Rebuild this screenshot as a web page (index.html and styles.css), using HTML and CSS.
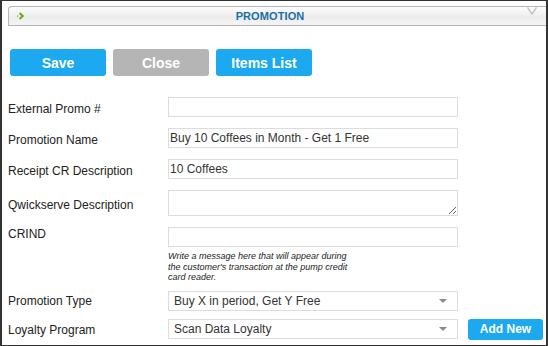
FILE: index.html
```html
<!doctype html>
<html>
<head>
<meta charset="utf-8">
<title>Promotion</title>
<link rel="stylesheet" href="styles.css">
</head>
<body>
<div class="frame">
	<div class="panel-head">
		<svg class="head-arrow" width="8" height="8" viewBox="0 0 8 8"><rect x="0" y="3.5" width="1.2" height="1.2" fill="#6ea61e"/><path d="M2.6 1 L5.8 4 L2.6 7" fill="none" stroke="#6ea61e" stroke-width="2"/></svg>
		<span class="head-title">PROMOTION</span>
		<svg class="head-notch" width="10" height="8" viewBox="0 0 10 8"><path d="M0.5 0.5 L5 7 L9.5 0.5" fill="none" stroke="#c4c4c4" stroke-width="1.4"/></svg>
	</div>
	<div class="toolbar">
		<button class="btn">Save</button>
		<button class="btn btn-grey">Close</button>
		<button class="btn">Items List</button>
	</div>
	<div class="form">
		<div class="row">
			<label>External Promo #</label>
			<input class="field" type="text" value="">
		</div>
		<div class="row">
			<label>Promotion Name</label>
			<input class="field" type="text" value="Buy 10 Coffees in Month - Get 1 Free">
		</div>
		<div class="row">
			<label>Receipt CR Description</label>
			<input class="field" type="text" value="10 Coffees">
		</div>
		<div class="row">
			<label>Qwickserve Description</label>
			<textarea class="field field-area"></textarea>
		</div>
		<div class="row row-top">
			<label>CRIND</label>
			<div>
				<input class="field" type="text" value="">
				<p class="hint">Write a message here that will appear during the customer's transaction at the pump credit card reader.</p>
			</div>
		</div>
		<div class="row row-select">
			<label>Promotion Type</label>
			<div class="field select"><span>Buy X in period, Get Y Free</span><i class="caret"></i></div>
		</div>
		<div class="row row-select">
			<label>Loyalty Program</label>
			<div class="field select"><span>Scan Data Loyalty</span><i class="caret"></i></div>
			<button class="btn btn-small">Add New</button>
		</div>
	</div>
</div>
</body>
</html>
```

FILE: styles.css
```css
*{margin:0; padding:0; box-sizing:border-box;}
body{font-family:"Liberation Sans", Arial, sans-serif; font-size:12px; color:#222; background:#fff; overflow:hidden;}
.frame{width:548px; height:346px; border:1px solid #333; border-left-width:2px; border-right-width:2px; overflow:hidden;}

/* panel header */
.panel-head{display:flex; align-items:center; height:20px; margin:5px 0 0 6px; padding:0 0 0 8px; border:1px solid #b6b6b6; border-right:none; border-radius:4px 0 0 0; background:linear-gradient(#fdfdfd, #ececec 55%, #f4f4f4);}
.head-arrow{flex:none;}
.head-title{flex:1; text-align:center; padding-right:12px; font-size:11px; font-weight:bold; color:#1b6ea7; letter-spacing:0.1px;}
.head-notch{flex:none; align-self:flex-start; margin:0 9px 0 0;}

/* buttons */
.toolbar{display:flex; gap:7px; margin-top:23px; padding-left:8px;}
.btn{width:96px; height:27px; border:none; border-radius:3px; background:#1ca9ef; color:#fff; font:bold 14px "Liberation Sans", Arial, sans-serif;}
.btn-grey{background:#b5b5b5;}
.btn-small{width:75px; height:21px; margin-left:10px; font-size:12px;}

/* form */
.form{margin-top:21px; padding-left:6px;}
.row{display:flex; align-items:center; margin-bottom:11px;}
.row label{width:160px; line-height:14px; padding-top:4px; flex:none;}
.row-top{align-items:flex-start; margin-bottom:8px;}
.row-top label{padding-top:0;}
.row-select{margin-bottom:8px;}
.row-select label{padding-top:1px;}
.field{width:290px; height:20px; border:1px solid #dcdcdc; background:#fff; font:12px "Liberation Sans", Arial, sans-serif; color:#333; padding:0 1px; outline:none;}
.field-area{display:block; height:26px; resize:vertical;}
.hint{width:184px; margin-top:4px; font-size:9px; line-height:10.5px; font-style:italic; color:#222;}
.select{display:flex; align-items:center; justify-content:space-between; padding:0 10px 0 5px;}
.caret{width:0; height:0; border-left:4px solid transparent; border-right:4px solid transparent; border-top:4px solid #8a8a8a;}
```
